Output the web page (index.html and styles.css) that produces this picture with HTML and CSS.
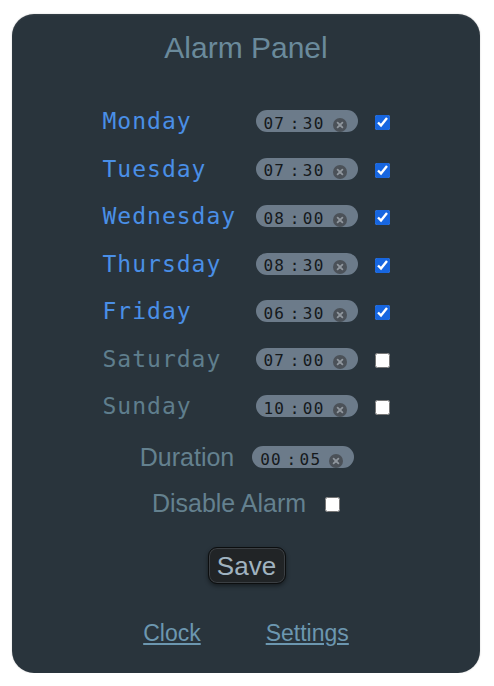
FILE: index.html
```html
<!DOCTYPE html>
<html lang="en">
<head>
<meta charset="utf-8">
<title>Alarm Panel</title>
<link rel="stylesheet" href="styles.css">
</head>
<body>
<main class="panel">
  <h1 class="title">Alarm Panel</h1>

  <div class="days">
    <span class="day on">Monday</span>
    <div class="time"><span class="hh">07</span><span class="sep">:</span><span class="mm">30</span><svg class="clr" viewBox="0 0 14 14"><circle cx="7" cy="7" r="7"/><path d="M4.6 4.6L9.4 9.4M9.4 4.6L4.6 9.4"/></svg></div>
    <input class="chk" type="checkbox" checked>

    <span class="day on">Tuesday</span>
    <div class="time"><span class="hh">07</span><span class="sep">:</span><span class="mm">30</span><svg class="clr" viewBox="0 0 14 14"><circle cx="7" cy="7" r="7"/><path d="M4.6 4.6L9.4 9.4M9.4 4.6L4.6 9.4"/></svg></div>
    <input class="chk" type="checkbox" checked>

    <span class="day on">Wednesday</span>
    <div class="time"><span class="hh">08</span><span class="sep">:</span><span class="mm">00</span><svg class="clr" viewBox="0 0 14 14"><circle cx="7" cy="7" r="7"/><path d="M4.6 4.6L9.4 9.4M9.4 4.6L4.6 9.4"/></svg></div>
    <input class="chk" type="checkbox" checked>

    <span class="day on">Thursday</span>
    <div class="time"><span class="hh">08</span><span class="sep">:</span><span class="mm">30</span><svg class="clr" viewBox="0 0 14 14"><circle cx="7" cy="7" r="7"/><path d="M4.6 4.6L9.4 9.4M9.4 4.6L4.6 9.4"/></svg></div>
    <input class="chk" type="checkbox" checked>

    <span class="day on">Friday</span>
    <div class="time"><span class="hh">06</span><span class="sep">:</span><span class="mm">30</span><svg class="clr" viewBox="0 0 14 14"><circle cx="7" cy="7" r="7"/><path d="M4.6 4.6L9.4 9.4M9.4 4.6L4.6 9.4"/></svg></div>
    <input class="chk" type="checkbox" checked>

    <span class="day">Saturday</span>
    <div class="time"><span class="hh">07</span><span class="sep">:</span><span class="mm">00</span><svg class="clr" viewBox="0 0 14 14"><circle cx="7" cy="7" r="7"/><path d="M4.6 4.6L9.4 9.4M9.4 4.6L4.6 9.4"/></svg></div>
    <input class="chk" type="checkbox">

    <span class="day">Sunday</span>
    <div class="time"><span class="hh">10</span><span class="sep">:</span><span class="mm">00</span><svg class="clr" viewBox="0 0 14 14"><circle cx="7" cy="7" r="7"/><path d="M4.6 4.6L9.4 9.4M9.4 4.6L4.6 9.4"/></svg></div>
    <input class="chk" type="checkbox">
  </div>

  <div class="row duration">
    <span class="label">Duration</span>
    <div class="time"><span class="hh">00</span><span class="sep">:</span><span class="mm">05</span><svg class="clr" viewBox="0 0 14 14"><circle cx="7" cy="7" r="7"/><path d="M4.6 4.6L9.4 9.4M9.4 4.6L4.6 9.4"/></svg></div>
  </div>

  <div class="row disable">
    <span class="label">Disable Alarm</span>
    <input class="chk" type="checkbox">
  </div>

  <div class="actions">
    <button class="save" type="button">Save</button>
  </div>

  <nav class="links">
    <a href="#">Clock</a>
    <a href="#">Settings</a>
  </nav>
</main>
</body>
</html>
```

FILE: styles.css
```css
html, body {
  margin: 0;
  padding: 0;
  background: #ffffff;
}

body {
  font-family: "Liberation Sans", Arial, sans-serif;
}

.panel {
  box-sizing: border-box;
  width: 468px;
  height: 659px;
  margin: 14px 14px 0 12px;
  padding-top: 17px;
  background: #29343c;
  border-radius: 22px;
  box-shadow: 0 0 2px rgba(0, 0, 0, 0.2), inset 0 1px 2px rgba(255, 255, 255, 0.07);
  display: flex;
  flex-direction: column;
}

.title {
  margin: 0;
  font-weight: normal;
  font-size: 30px;
  line-height: 34px;
  text-align: center;
  color: #6a8a9b;
}

.days {
  margin-top: 32.25px;
  display: grid;
  grid-template-columns: 136px 102px 15px;
  column-gap: 17px;
  grid-auto-rows: 47.5px;
  align-items: center;
  justify-content: center;
}

.day {
  font-family: "DejaVu Sans Mono", monospace;
  font-size: 23px;
  letter-spacing: 1px;
  color: #5f7e8d;
  white-space: nowrap;
}

.day.on {
  color: #4a8fe7;
}

.time {
  box-sizing: border-box;
  width: 102px;
  height: 22px;
  padding: 5.5px 11px 0 8px;
  border-radius: 11px;
  background: #6c7b8a;
  display: flex;
  align-items: flex-start;
  font-family: "DejaVu Sans Mono", monospace;
  font-size: 16px;
  line-height: 16px;
  color: #15191c;
}

.hh, .mm {
  letter-spacing: 1.2px;
}

.sep {
  margin: 0 3.5px 0 4.5px;
}

.clr {
  width: 14px;
  height: 14px;
  margin: 2px 0 0 auto;
  flex: none;
}

.clr circle {
  fill: #4b5158;
}

.clr path {
  stroke: #8f969d;
  stroke-width: 1.8;
  stroke-linecap: round;
  fill: none;
}

.chk {
  width: 15px;
  height: 15px;
  margin: 0;
  accent-color: #1766e0;
}

.days .chk {
  position: relative;
  top: 1.5px;
}

.row {
  height: 46px;
  display: flex;
  align-items: center;
  justify-content: center;
}

.duration {
  margin-top: 4.25px;
  gap: 18px;
}

.disable {
  gap: 19px;
}

.label {
  font-size: 25px;
  color: #64818f;
}

.duration .label {
  margin-left: 2px;
}

.disable .chk {
  position: relative;
  top: 1.5px;
}

.actions {
  margin-top: 21px;
  display: flex;
  justify-content: center;
}

.save {
  box-sizing: border-box;
  width: 78px;
  height: 37px;
  padding: 0;
  margin-left: 1px;
  border: 1px solid #0c0e0f;
  border-radius: 9px;
  background: #212426;
  box-shadow: inset 0 0 0 1px #3b3f43, 0 2px 4px rgba(0, 0, 0, 0.45);
  font-family: "Liberation Sans", Arial, sans-serif;
  font-size: 26px;
  line-height: 37px;
  color: #a0b3c0;
}

.links {
  margin-top: 36px;
  display: flex;
  justify-content: center;
  gap: 65px;
}

.links a {
  font-size: 23px;
  line-height: 26px;
  color: #6c97b0;
  text-decoration: underline;
}
```
